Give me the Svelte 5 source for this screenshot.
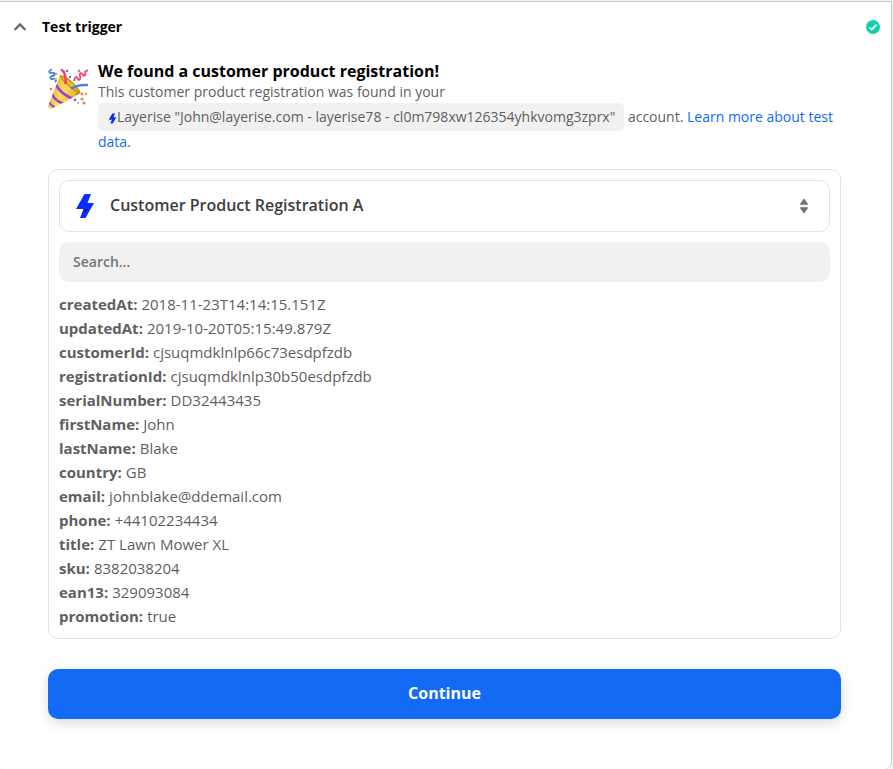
<script lang="ts">
	let open = true;
	let search = '';
	let selected = 'a';

	const fields = [
		{ key: 'createdAt', value: '2018-11-23T14:14:15.151Z' },
		{ key: 'updatedAt', value: '2019-10-20T05:15:49.879Z' },
		{ key: 'customerId', value: 'cjsuqmdklnlp66c73esdpfzdb' },
		{ key: 'registrationId', value: 'cjsuqmdklnlp30b50esdpfzdb' },
		{ key: 'serialNumber', value: 'DD32443435' },
		{ key: 'firstName', value: 'John' },
		{ key: 'lastName', value: 'Blake' },
		{ key: 'country', value: 'GB' },
		{ key: 'email', value: 'johnblake@ddemail.com' },
		{ key: 'phone', value: '+44102234434' },
		{ key: 'title', value: 'ZT Lawn Mower XL' },
		{ key: 'sku', value: '8382038204' },
		{ key: 'ean13', value: '329093084' },
		{ key: 'promotion', value: 'true' }
	];

	$: term = search.toLowerCase();
	$: visible = fields.filter((f) => `${f.key} ${f.value}`.toLowerCase().includes(term));
</script>

<section class="panel">
	<button class="header" aria-expanded={open} on:click={() => (open = !open)}>
		<svg class="chevron" class:closed={!open} viewBox="0 0 16 16" aria-hidden="true">
			<path d="M2.600 11 8 5.400l5.400 5.600" fill="none" stroke="#666" stroke-width="2.200" />
		</svg>
		<span class="step">Test trigger</span>
		<svg class="check" viewBox="0 0 14 14" aria-hidden="true">
			<circle cx="7" cy="7" r="7" fill="#13d0ac" />
			<path d="m3.2 7.2 2.4 2.4 5-5" fill="none" stroke="#fff" stroke-width="1.5" />
		</svg>
	</button>

	{#if open}
		<div class="content">
			<div class="found">
				<svg class="party" viewBox="0 0 40 42" aria-hidden="true">
					<defs>
						<linearGradient id="cone" x1="0" y1="0.3" x2="1" y2="0.8">
							<stop offset="0" stop-color="#d79b1c" />
							<stop offset="0.4" stop-color="#ffdf5e" />
							<stop offset="1" stop-color="#d8930f" />
						</linearGradient>
						<clipPath id="cone-shape">
							<path d="M12 7.5C18 7 31 19 32.500 25.500L4 40.500Q-.5 41.500.5 37Z" />
						</clipPath>
					</defs>
					<g clip-path="url(#cone-shape)">
						<path d="M0 5h36v37H0z" fill="url(#cone)" />
						<path d="M8 17q5 9 17 14" fill="none" stroke="#9a43d6" stroke-width="2.600" />
						<path d="M4 26q3 7 12 10" fill="none" stroke="#9a43d6" stroke-width="2.600" />
						<path d="M1 34q2 4 6 5" fill="none" stroke="#9a43d6" stroke-width="1.800" />
					</g>
					<path d="M12 7.5c3-1 8 2 13 7s8 9 7.500 11c-5-1-10-5-14-9s-7-7-6.500-9z" fill="#d0900f" />
					<path d="M14 9c5 1 13 8 16 14-5-2-13-8-16-14z" fill="#efb934" />
					<path d="M17.500 16C18 10 18 4 13 1.500" fill="none" stroke="#ed4163" stroke-width="2.500" />
					<path d="M23 20.500c5-3 10-4 17-3.500" fill="none" stroke="#4684e6" stroke-width="2.500" />
					<path d="M4 1.500c-5 2-2 4 0 3.500 4-1 3 3 0 3-3 1-1 4 1 3 3-1 4 1 2 3" fill="none" stroke="#397ce4" stroke-width="1.800" />
					<path d="M26 13c1-5 3-5 4-2 1 2 3 0 2-3-1-4 2-3 3-1 2 2 3-1 2-3l3-2" fill="none" stroke="#ee4770" stroke-width="1.800" />
					<g fill="#4a83dd">
						<circle cx="19" cy="3" r="1.300" />
						<circle cx="22" cy="9" r="1.300" />
						<circle cx="27" cy="32" r="1.400" />
						<circle cx="29" cy="26" r="1" />
					</g>
					<g fill="#f08b42">
						<circle cx="34" cy="26" r="1.500" />
						<circle cx="38" cy="26" r="1.200" />
						<circle cx="34" cy="31" r="1.600" />
						<circle cx="8" cy="6" r="1.200" />
					</g>
					<g fill="#eb719d">
						<circle cx="31" cy="3" r="1.400" />
						<circle cx="36" cy="35" r="1.500" />
						<circle cx="3" cy="21" r="1.300" />
						<circle cx="30" cy="35" r=".9" />
					</g>
					<circle cx="8" cy="11" r="1.200" fill="#f2cf24" />
				</svg>
				<div class="message">
					<h2>We found a customer product registration!</h2>
					<p>
						This customer product registration was found in your
						<span class="account"
							><svg class="bolt-small" viewBox="0 0 18 26" aria-hidden="true">
								<path d="M8.500 1H15l-3.500 9H18L9.500 25H4l3.500-9H0z" fill="#0a2cff" />
							</svg>Layerise "John@layerise.com - layerise78 - cl0m798xw126354yhkvomg3zprx"</span
						>
						account. <a href="#test-data">Learn more about test data</a>.
					</p>
				</div>
			</div>

			<div class="card">
				<div class="picker">
					<svg class="bolt" viewBox="0 0 18 26" aria-hidden="true">
						<path d="M8.500 1H15l-3.500 9H18L9.500 25H4l3.500-9H0z" fill="#0a2cff" />
						<path d="M7.500 16h4.500l-3 3.500z" fill="#0c1690" />
					</svg>
					<select bind:value={selected} aria-label="Test record">
						<option value="a">Customer Product Registration A</option>
					</select>
					<svg class="arrows" viewBox="0 0 8 16" aria-hidden="true">
						<path d="M4 .8 7.600 5.800v.8H.4v-.8zM4 15.200.4 10.200v-.8h7.200v.8z" fill="#737373" stroke="#737373" stroke-width=".6" stroke-linejoin="round" />
					</svg>
				</div>
				<input class="search" type="text" placeholder="Search..." aria-label="Search fields" bind:value={search} />
				<dl>
					{#each visible as field}
						<div class="row">
							<dt>{field.key}:</dt>
							<dd>{field.value}</dd>
						</div>
					{/each}
				</dl>
			</div>

			<button class="continue">Continue</button>
		</div>
	{/if}
</section>

<style>
	:global(body) {
		background: #f7f6f4;
		font-family: 'Open Sans', sans-serif;
	}

	.panel {
		margin: 1px 1px 0 0;
		border: 1px solid #c8c8c8;
		border-left: none;
		border-bottom: none;
		border-radius: 0 0 8px 4px;
		background: #fff;
	}

	.header {
		display: flex;
		align-items: center;
		gap: 14px;
		width: 100%;
		height: 50px;
		padding: 0 11px 0 12px;
		border: none;
		background: none;
		font: 700 14px/20px 'Open Sans', sans-serif;
		color: #000;
		text-align: left;
		cursor: pointer;
	}

	.step {
		flex: 1;
	}

	.chevron {
		width: 16px;
		height: 16px;
	}

	.chevron.closed {
		transform: rotate(180deg);
	}

	.check {
		width: 14px;
		height: 14px;
	}

	.content {
		padding: 9px 50px 50px 48px;
	}

	.found {
		display: flex;
		gap: 10px;
	}

	.party {
		flex: none;
		width: 40px;
		height: 42px;
		margin-top: 7px;
	}

	h2 {
		margin: 0;
		font-size: 16px;
		line-height: 20px;
		font-weight: 700;
		color: #000;
	}

	p {
		margin: 0;
		font-size: 14px;
		line-height: 22px;
		color: #5f5f5f;
	}

	.account {
		display: inline-block;
		padding: 0 9px 0 10px;
		border-radius: 5px;
		background: #f1f1f1;
		line-height: 28px;
	}

	.bolt-small {
		width: 9px;
		height: 11px;
		vertical-align: -2px;
	}

	a {
		color: #136bf5;
		text-decoration: none;
	}

	.card {
		display: flex;
		flex-direction: column;
		gap: 10px;
		margin-top: 16px;
		padding: 10px;
		border: 1px solid #e3e3e3;
		border-radius: 10px;
	}

	.picker {
		display: flex;
		align-items: center;
		height: 50px;
		padding: 0 21px 0 16px;
		border: 1px solid #e3e3e3;
		border-radius: 10px;
	}

	.bolt {
		width: 18px;
		height: 26px;
	}

	select {
		flex: 1;
		min-width: 0;
		margin-left: 16px;
		padding: 0 0 2px;
		border: none;
		background: none;
		appearance: none;
		font: 600 16px/24px 'Open Sans', sans-serif;
		color: #3d3d3d;
	}

	.search {
		box-sizing: border-box;
		height: 40px;
		padding: 0 14px 2px;
		border: none;
		border-radius: 10px;
		background: #f1f1f1;
		font: 600 14px/20px 'Open Sans', sans-serif;
		color: #3d3d3d;
	}

	.search::placeholder {
		color: #757575;
	}

	.arrows {
		width: 8px;
		height: 16px;
	}

	dl {
		margin: 0;
		font-size: 15px;
		line-height: 24px;
		color: #5f5f5f;
	}

	.row {
		display: flex;
		gap: 4px;
	}

	dt {
		font-weight: 700;
	}

	dd {
		margin: 0;
	}

	.continue {
		display: block;
		width: 100%;
		height: 50px;
		margin-top: 30px;
		padding: 0 0 2px;
		border: none;
		border-radius: 10px;
		background: #136bf5;
		box-shadow: 0 4px 12px rgba(0, 0, 0, 0.15);
		font: 700 16px/24px 'Open Sans', sans-serif;
		color: #fff;
		cursor: pointer;
	}
</style>
